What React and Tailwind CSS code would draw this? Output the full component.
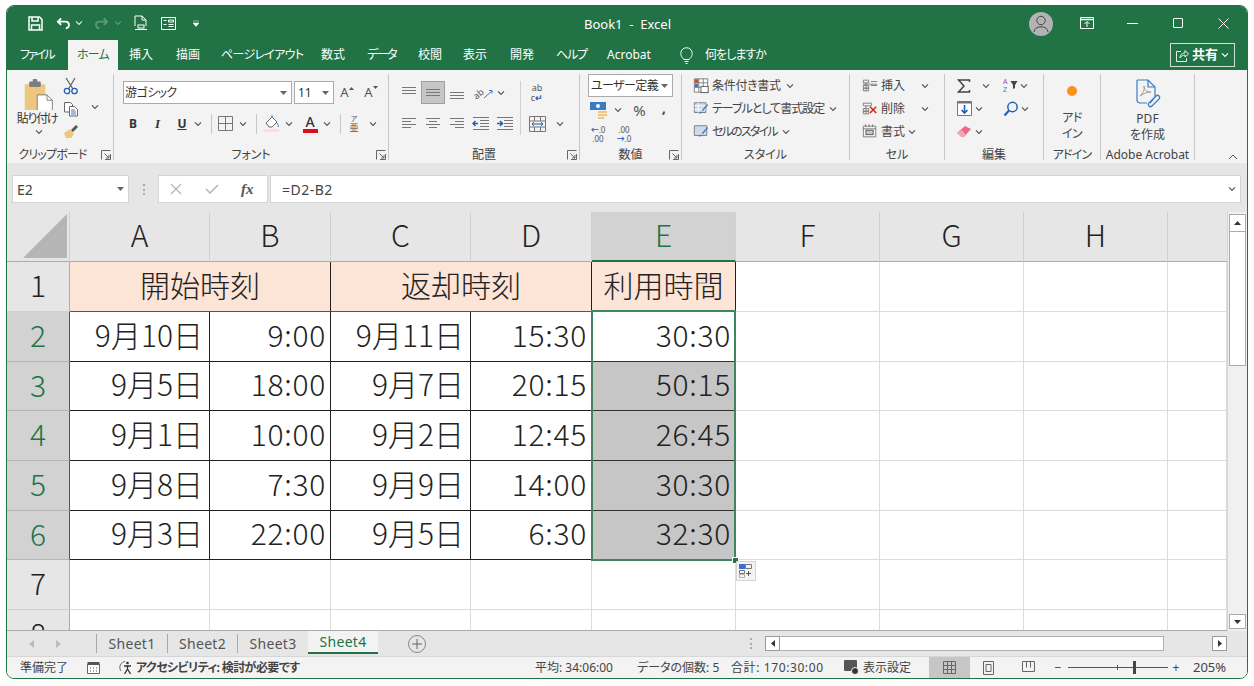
import React from 'react';

const Chev = ({ c = '#555' }) => (
  <svg width="8" height="6" viewBox="0 0 8 6" className="shrink-0"><path d="M1 1.3 L4 4.3 L7 1.3" stroke={c} fill="none" strokeWidth="1.2" /></svg>
);
const Launcher = () => (
  <svg width="10" height="10" viewBox="0 0 10 10" className="shrink-0"><path d="M.5 9.500V.5h9M9.500 4v5.500H4M3.500 3.500 8 8M8 5v3H5" stroke="#666" fill="none" strokeWidth="1" /></svg>
);
const Lines = ({ v }) => {
  const sets = {
    top: [[1, 15, 2], [1, 15, 5], [1, 15, 8]],
    mid: [[1, 15, 4], [1, 15, 7], [1, 15, 10]],
    bot: [[1, 15, 7], [1, 15, 10], [1, 15, 13]],
    left: [[1, 15, 2], [1, 10, 5], [1, 15, 8], [1, 10, 11]],
    center: [[1, 15, 2], [4, 12, 5], [1, 15, 8], [4, 12, 11]],
    right: [[1, 15, 2], [6, 15, 5], [1, 15, 8], [6, 15, 11]],
  };
  return (
    <svg width="16" height="15" viewBox="0 0 16 15">
      {sets[v].map((l, i) => <path key={i} d={`M${l[0]} ${l[2] + .5}H${l[1]}`} stroke="#777" />)}
    </svg>
  );
};
const Indent = ({ flip }) => (
  <svg width="18" height="15" viewBox="0 0 18 15">
    <path d="M1 1.500H17M8 4.500H17M8 7.500H17M8 10.500H17M1 13.500H17" stroke="#777" />
    {flip
      ? <path d="M1 7.500H6M4 5 6.500 7.500 4 10" stroke="#1f5fb5" strokeWidth="1.500" fill="none" />
      : <path d="M6 7.500H1M3.500 5 1 7.500 3.500 10" stroke="#1f5fb5" strokeWidth="1.500" fill="none" />}
  </svg>
);
const Save = () => (
  <svg width="15" height="15" viewBox="0 0 15 15"><path d="M1 1h10.500L14 3.500V14H1zM4 1v4h6V1M3.500 14V9h8v5" fill="none" stroke="#fff" strokeWidth="1.500" /></svg>
);
const Undo = ({ c = '#fff' }) => (
  <svg width="15" height="13" viewBox="0 0 16 13"><path d="M5.500 1 2 4.500 5.500 8M2 4.500h8c5 0 5 7 .5 7" fill="none" stroke={c} strokeWidth="2" /></svg>
);
const Redo = ({ c }) => (
  <svg width="15" height="13" viewBox="0 0 16 13"><path d="M10.500 1 14 4.500 10.500 8M14 4.500H6c-5 0-5 7-.5 7" fill="none" stroke={c} strokeWidth="2" /></svg>
);
const TableIcon = ({ children }) => (
  <svg width="16" height="17" viewBox="0 0 18 18">{children}</svg>
);
const Drop = () => (
  <svg width="7" height="4" viewBox="0 0 7 4" className="shrink-0"><path d="M0 0h7L3.500 4z" fill="#666" /></svg>
);

function Group({ className, label, children, launcher }) {
  return (
    <div className={`h-[86px] flex flex-col border-r border-[#c6c6c6] shrink-0 relative ${className}`}>
      <div className="h-[75px]">{children}</div>
      <div className="h-[11px] flex items-center justify-center text-[12px] leading-[11px] text-[#444] relative">
        <span className="whitespace-nowrap">{label}</span>
        {launcher && <span className="absolute right-[2px] top-[1px]"><Launcher /></span>}
      </div>
    </div>
  );
}

const RowText = ({ icon, label, gap = '' }) => (
  <div className="h-[23px] flex items-center text-[12px] text-[#444] whitespace-nowrap">
    <span className="w-[19px] flex justify-center">{icon}</span>
    <span className={`ml-[2px] ${gap}`}>{label}</span>
    <Chev />
  </div>
);

function Ribbon() {
  return (
    <div className="h-[93px] bg-[#f3f3f3] flex items-start pt-[4px] relative shrink-0">
      <Group className="w-[107px]" label={<span className="pr-[15px] tracking-[-0.8px]">クリップボード</span>} launcher>
        <div className="flex">
          <div className="ml-[10px] w-[44px] flex flex-col items-center">
            <svg width="34" height="32" viewBox="0 0 36 36" className="mt-[4px]">
              <rect x="2" y="7" width="23" height="29" fill="#eec77f" />
              <rect x="7" y="4" width="13" height="6" rx="1" fill="#7d7d7d" />
              <rect x="11" y="1" width="5" height="5" rx="1" fill="#7d7d7d" />
              <path d="M16 19h11l6 6v12H16z" fill="#fff" stroke="#777" />
              <path d="M27 19v6h6" fill="none" stroke="#777" />
            </svg>
            <span className="text-[12px] leading-[14px] text-[#333] whitespace-nowrap tracking-[-1.3px] mr-[4px] mt-[2px]">貼り付け</span>
            <span className="mt-[3px]"><Chev /></span>
          </div>
          <div className="flex flex-col items-center w-[20px]">
            <div className="h-[23px] flex items-center">
              <svg width="16" height="18" viewBox="0 0 16 18"><path d="M3 1 10 12M12 1 5.500 12" stroke="#666" strokeWidth="1.300" fill="none" /><circle cx="4" cy="14" r="2.700" fill="none" stroke="#1f5fb5" strokeWidth="1.300" /><circle cx="11.500" cy="14" r="2.700" fill="none" stroke="#1f5fb5" strokeWidth="1.300" /></svg>
            </div>
            <div className="h-[23px] flex items-center">
              <svg width="16" height="16" viewBox="0 0 16 16"><path d="M1.500 1.500h6l2 2V11h-8z" fill="#fff" stroke="#666" /><path d="M6.500 5.500h5l3 3v6.500h-8z" fill="#fff" stroke="#666" /><path d="M8 9h4M8 11h5M8 13h5" stroke="#3b7bc4" /></svg>
            </div>
            <div className="h-[23px] flex items-center">
              <svg width="16" height="15" viewBox="0 0 16 15"><path d="M1 9 7 5l4 5-3 4H3z" fill="#eec77f" /><path d="M8 6l5-5 2 2-5 5z" fill="#555" /></svg>
            </div>
          </div>
          <div className="ml-[10px] h-[65px] flex items-center"><Chev /></div>
        </div>
      </Group>

      <Group className="w-[275px]" label="フォント" launcher>
        <div className="pl-[9px] pt-[7px]">
          <div className="flex items-center h-[23px]">
            <div className="w-[169px] h-[23px] bg-white border border-[#ababab] flex items-center justify-between pl-[1px] pr-[4px] text-[12px] text-[#333]">
              <span className="tracking-[-0.6px]">游ゴシック</span>
              <Drop />
            </div>
            <div className="ml-[2px] w-[40px] h-[23px] bg-white border border-[#ababab] flex items-center justify-between pl-[3px] pr-[4px] text-[12px] text-[#333]">
              <span>11</span>
              <Drop />
            </div>
            <div className="w-[24px] ml-[1px] flex justify-center items-start text-[13px] text-[#555]">
              A<svg width="5" height="4" viewBox="0 0 5 4" className="mt-[3px]"><path d="M0 4l2.500-3L5 4" fill="#555" /></svg>
            </div>
            <div className="w-[24px] flex justify-center items-start text-[13px] text-[#555]">
              A<svg width="5" height="4" viewBox="0 0 5 4" className="mt-[3px]"><path d="M0 0l2.500 3L5 0" fill="#555" /></svg>
            </div>
          </div>
          <div className="flex items-center h-[23px] mt-[8px] text-[#333]">
            <span className="w-[24px] ml-[-2px] text-center font-bold text-[12px]">B</span>
            <span className="w-[25px] text-center italic font-bold text-[13px] font-['Liberation_Serif',serif]">I</span>
            <span className="w-[24px] text-center underline font-bold text-[12px]">U</span>
            <span className="w-[10px]"><Chev /></span>
            <span className="w-[7px]" />
            <span className="h-[20px] border-r border-[#c6c6c6]" />
            <span className="w-[27px] flex justify-center">
              <svg width="15" height="15" viewBox="0 0 15 15"><path d="M.5.500h14v14H.5zM7.500.500v14M.5 7.500h14" stroke="#777" fill="none" /></svg>
            </span>
            <span className="w-[10px]"><Chev /></span>
            <span className="w-[7px]" />
            <span className="h-[20px] border-r border-[#c6c6c6]" />
            <span className="ml-[3px] w-[24px] flex justify-center">
              <svg width="16" height="17" viewBox="0 0 16 17"><path d="M2 8 8 2l5 5-5 5H5z" fill="#fff" stroke="#666" /><path d="M8 2V0M13 8c1 2 2 3 1 4" stroke="#3b7bc4" fill="none" /><rect y="14.500" width="15" height="2" fill="#f9d9cd" /></svg>
            </span>
            <span className="ml-[1px] w-[10px]"><Chev /></span>
            <span className="w-[5px]" />
            <span className="w-[20px] flex flex-col items-center">
              <span className="text-[14px] leading-[14px] font-medium text-[#333]">A</span>
              <span className="w-[15px] h-[4px] bg-[#e00b1c]" />
            </span>
            <span className="w-[3px]" />
            <span className="w-[10px]"><Chev /></span>
            <span className="w-[7px]" />
            <span className="h-[20px] border-r border-[#c6c6c6]" />
            <span className="w-[26px] flex justify-center flex-col items-center text-[7px] leading-[8px] text-[#555]"><span>ア</span><span className="text-[9px] leading-[10px]">亜</span></span>
            <span className="w-[10px] ml-[2px]"><Chev /></span>
          </div>
        </div>
      </Group>

      <Group className="w-[191px]" label="配置" launcher>
        <div className="flex pl-[8px] pt-[7px]">
          <div>
            <div className="flex items-center h-[23px]">
              <span className="w-[24px] flex justify-center"><Lines v="top" /></span>
              <span className="w-[24px] h-[23px] flex items-center justify-center bg-[#c6c6c6] border border-[#a0a0a0]"><Lines v="mid" /></span>
              <span className="w-[24px] flex justify-center"><Lines v="bot" /></span>
              <span className="w-[28px] flex justify-center">
                <svg width="20" height="16" viewBox="0 0 20 16"><text x="1" y="12" fontSize="9" fill="#555" transform="rotate(-38 6 10)">ab</text><path d="M11 13 19 6M16 5.500h3v3" stroke="#3b7bc4" fill="none" /></svg>
              </span>
              <Chev />
            </div>
            <div className="flex items-center h-[23px] mt-[8px]">
              <span className="w-[24px] flex justify-center"><Lines v="left" /></span>
              <span className="w-[24px] flex justify-center"><Lines v="center" /></span>
              <span className="w-[24px] flex justify-center"><Lines v="right" /></span>
              <span className="w-[24px] flex justify-center"><Indent /></span>
              <span className="w-[24px] flex justify-center"><Indent flip /></span>
            </div>
          </div>
          <div className="ml-[3px] h-[54px] border-r border-[#d0d0d0]" />
          <div className="ml-[4px]">
            <div className="h-[23px] w-[24px] flex flex-col items-center justify-center text-[9px] leading-[10px] text-[#555]">
              <span>ab</span>
              <span>c<b className="text-[#1f5fb5]">↵</b></span>
            </div>
            <div className="h-[23px] mt-[8px] flex items-center">
              <span className="w-[24px] flex justify-center">
                <svg width="17" height="16" viewBox="0 0 17 16"><path d="M.5.500h16v15H.5zM.5 5h16M.5 11h16M5.500.500V5M11.500.500V5M5.500 11v4.500M11.500 11v4.500" stroke="#777" fill="none" /><path d="M3 8h11M5 6.300 3 8l2 1.700M12 6.300 14 8l-2 1.700" stroke="#1f5fb5" fill="none" /></svg>
              </span>
              <span className="ml-[7px]"><Chev /></span>
            </div>
          </div>
        </div>
      </Group>

      <Group className="w-[102px]" label="数値" launcher>
        <div className="pl-[8px]">
          <div className="w-[85px] h-[23px] bg-white border border-[#ababab] flex items-center justify-between pl-[2px] pr-[4px] text-[12px] text-[#333]">
            <span className="whitespace-nowrap tracking-[-0.6px]">ユーザー定義</span>
            <Drop />
          </div>
          <div className="flex items-center h-[24px] mt-[1px] pl-[2px]">
            <span className="w-[18px] flex justify-center">
              <svg width="18" height="17" viewBox="0 0 18 17"><rect width="16" height="8" fill="#3b7bc4" /><circle cx="8" cy="4" r="2" fill="#fff" /><rect x="8" y="9" width="9" height="2" fill="#eec77f" /><rect x="8" y="12" width="9" height="2" fill="#eec77f" /><rect x="8" y="15" width="6" height="2" fill="#eec77f" /></svg>
            </span>
            <span className="ml-[6px]"><Chev /></span>
            <span className="w-[29px] ml-[3px] text-center text-[15px] text-[#555]">%</span>
            <span className="w-[20px] text-center text-[15px] font-bold text-[#555] leading-[15px] pb-[5px]">,</span>
          </div>
          <div className="flex items-center h-[24px] gap-[6px]">
            <div className="w-[20px] flex flex-col items-center text-[8px] leading-[9px] text-[#555]"><span><b className="text-[#1f5fb5]">←</b>.0</span><span>.00</span></div>
            <div className="w-[20px] flex flex-col items-center text-[8px] leading-[9px] text-[#555]"><span>.00</span><span><b className="text-[#1f5fb5]">→</b>.0</span></div>
          </div>
        </div>
      </Group>

      <Group className="w-[168px]" label="スタイル">
        <div className="pl-[9px]">
          <RowText gap="mr-[5px] tracking-[-0.3px]" label="条件付き書式" icon={
            <TableIcon><path d="M1.500 1.500h15v15h-15zM1.500 6h15M1.500 11h15M6.500 1.500v15M11.500 1.500v15" stroke="#777" fill="#fff" /><rect x="2" y="2" width="4" height="4" fill="#d24726" /><rect x="2" y="7" width="4" height="4" fill="#3b7bc4" /><rect x="9" y="10" width="8" height="7" fill="#fff" stroke="#555" /></TableIcon>
          } />
          <RowText gap="mr-[5px] tracking-[-1px]" label="テーブルとして書式設定" icon={
            <TableIcon><path d="M1.500 2.500h13v11h-13z" fill="#cfd9ea" stroke="#777" /><path d="M1.500 6h13M1.500 10h13M6 2.500v11" stroke="#fff" /><path d="M10 11 16 4l1 1-6 7zM6 15c2-3 4-3 4-1" fill="#3b7bc4" /></TableIcon>
          } />
          <RowText gap="mr-[5px] tracking-[-1.8px]" label="セルのスタイル" icon={
            <TableIcon><path d="M1.500 2.500h14v11h-14z" fill="#cfd9ea" stroke="#777" /><path d="M10 11 16 4l1 1-6 7zM6 15c2-3 4-3 4-1" fill="#3b7bc4" /></TableIcon>
          } />
        </div>
      </Group>

      <Group className="w-[95px]" label="セル">
        <div className="pl-[10px]">
          <div className="h-[23px] flex items-center text-[12px] text-[#444]">
            <span className="w-[19px] flex justify-center"><TableIcon><path d="M1.500 3h6v3h-6zM1.500 9h6v3h-6zM1.500 12h6v3h-6zM4.500 6v9M1 7.500h16M10 4.500h7" stroke="#777" fill="none" /><path d="M10 9h7" stroke="#3b7bc4" /></TableIcon></span>
            <span className="ml-[2px] w-[24px] whitespace-nowrap">挿入</span>
            <span className="ml-[16px]"><Chev /></span>
          </div>
          <div className="h-[23px] flex items-center text-[12px] text-[#444]">
            <span className="w-[19px] flex justify-center"><TableIcon><path d="M1.500 3h9v3h-9zM1.500 9h6v3h-6zM1.500 12h6v3h-6zM4.500 6v9" stroke="#777" fill="none" /><path d="M9 7l7 7M16 7l-7 7" stroke="#d02a1c" strokeWidth="1.800" /></TableIcon></span>
            <span className="ml-[2px] w-[24px] whitespace-nowrap">削除</span>
            <span className="ml-[16px]"><Chev /></span>
          </div>
          <div className="h-[23px] flex items-center text-[12px] text-[#444]">
            <span className="w-[19px] flex justify-center"><TableIcon><path d="M1.500 3h14v12h-14zM4 1v3M8 1v3M12 1v3M1 6h15" stroke="#777" fill="none" /><rect x="4.500" y="7.500" width="8" height="5" fill="#c8c8c8" stroke="#555" /></TableIcon></span>
            <span className="ml-[2px] w-[24px] whitespace-nowrap">書式</span>
            <span className="ml-[3px]"><Chev /></span>
          </div>
        </div>
      </Group>

      <Group className="w-[99px]" label="編集">
        <div className="pl-[10px]">
          <div className="h-[23px] flex items-center">
            <span className="w-[18px] flex justify-center">
              <svg width="14" height="14" viewBox="0 0 14 14"><path d="M12.500 3V1H1.500l5.500 6-5.500 6h11v-2" fill="none" stroke="#444" strokeWidth="1.500" /></svg>
            </span>
            <span className="ml-[9px]"><Chev /></span>
            <span className="ml-[12px] w-[18px] flex justify-center">
              <svg width="16" height="15" viewBox="0 0 16 15"><text x="0" y="6" fontSize="7" fill="#8a4db0">A</text><text x="0" y="14" fontSize="7" fill="#3b7bc4">Z</text><path d="M7.500 3h7L12 7v3l-2 1V7z" fill="#444" /></svg>
            </span>
            <Chev />
          </div>
          <div className="h-[23px] flex items-center">
            <span className="w-[18px] flex justify-center">
              <svg width="15" height="15" viewBox="0 0 15 15"><path d="M.5.500h14v14H.5z" fill="#fff" stroke="#777" /><rect x=".5" y=".5" width="14" height="2" fill="#777" /><path d="M7.500 4v8M4.500 9l3 3 3-3" fill="none" stroke="#1f5fb5" strokeWidth="1.600" /></svg>
            </span>
            <span className="ml-[2px]"><Chev /></span>
            <span className="ml-[19px] w-[18px] flex justify-center">
              <svg width="16" height="16" viewBox="0 0 16 16"><circle cx="9.500" cy="6" r="4.700" fill="none" stroke="#1f5fb5" strokeWidth="1.500" /><path d="M6 9.500 1.500 14.500" stroke="#1f5fb5" strokeWidth="2" /></svg>
            </span>
            <span className="ml-[1px]"><Chev /></span>
          </div>
          <div className="h-[23px] flex items-center">
            <span className="w-[18px] flex justify-center">
              <svg width="15" height="13" viewBox="0 0 15 13"><path d="M0 8 8 1l6 3-7 8z" fill="#ea6a86" /><path d="M0 8l4 4h3l2-2-4-5z" fill="#f3a4b5" /></svg>
            </span>
            <span className="ml-[2px]"><Chev /></span>
          </div>
        </div>
      </Group>

      <Group className="w-[57px]" label={<span className="tracking-[-0.8px]">アドイン</span>}>
        <div className="flex flex-col items-center">
          <span className="w-[10px] h-[10px] rounded-full bg-[#f9921e] mt-[12px]" />
          <span className="text-[12px] leading-[16px] text-[#444] text-center mt-[14px] tracking-[-0.6px]">アド<br />イン</span>
        </div>
      </Group>

      <Group className="w-[94px]" label="Adobe Acrobat">
        <div className="flex flex-col items-center">
          <svg width="26" height="30" viewBox="0 0 26 30" className="mt-[5px]">
            <path d="M2 1h11l7 7v10M13 1v7h7M12 24H5a3 3 0 0 1-3-3V1" fill="none" stroke="#3b7bc4" strokeWidth="1.200" />
            <path d="M5 17c3-2 5-7 4-10 0 4 3 6 7 6-3 0-7 1-11 4z" fill="none" stroke="#8a8a8a" strokeWidth=".8" />
            <path d="M15 24l6-7a2 2 0 0 1 3 3l-7 7a2 2 0 0 1-3-3l5-5" fill="none" stroke="#3b7bc4" strokeWidth="1.200" />
          </svg>
          <span className="text-[12px] leading-[16px] text-[#444] text-center mt-[2px]">PDF<br />を作成</span>
        </div>
      </Group>

      <span className="absolute right-[9px] bottom-[3px]">
        <svg width="10" height="6" viewBox="0 0 10 6"><path d="M1 5l4-4 4 4" stroke="#555" fill="none" /></svg>
      </span>
    </div>
  );
}

const hdrCell = 'flex items-center justify-center pb-[4px] bg-[#e6e6e6] border-r border-b border-r-[#d0d0d0] border-b-[#ababab] text-[30px] text-[#222]';
const rowSel = 'flex items-center justify-center pb-[4px] bg-[#d2d2d2] border-r border-b border-r-[#217346] border-b-[#b5b5b5] text-[30px] text-[#217346]';
const rowNorm = 'flex items-center justify-center pb-[4px] bg-[#e6e6e6] border-r border-b border-r-[#ababab] border-b-[#d0d0d0] text-[30px] text-[#222]';
const blank = 'bg-white border-r border-b border-[#dcdcdc]';
const head = 'bg-[#fce4d6] border-r border-b border-r-[#222] border-b-[#555] flex items-center justify-center pb-[5px] text-[30px] text-[#222]';
const dateCell = 'bg-white border-r border-b border-[#222] flex items-center justify-end pr-[6px] pb-[5px] text-[30px] text-[#222]';
const timeCell = 'bg-white border-r border-b border-[#222] flex items-center justify-end pr-[4px] pb-[5px] text-[30px] tracking-[0.7px] text-[#222]';
const dataSel = 'bg-[#c6c6c6] border-b border-[#333] flex items-center justify-end pr-[5px] pb-[5px] text-[30px] tracking-[0.7px] text-[#222]';
const dataFirst = 'bg-white border-b border-[#333] flex items-center justify-end pr-[5px] pb-[5px] text-[30px] tracking-[0.7px] text-[#222]';

const table = [
  ['9月10日', '9:00', '9月11日', '15:30', '30:30'],
  ['9月5日', '18:00', '9月7日', '20:15', '50:15'],
  ['9月1日', '10:00', '9月2日', '12:45', '26:45'],
  ['9月8日', '7:30', '9月9日', '14:00', '30:30'],
  ['9月3日', '22:00', '9月5日', '6:30', '32:30'],
];

function Sheet() {
  return (
    <div className="h-[419px] flex shrink-0">
      <div className="relative w-[1220px] overflow-hidden border-b border-[#ababab] font-['Noto_Sans_CJK_JP',sans-serif] font-light [font-feature-settings:normal]">
        <div className="grid grid-cols-[63px_140px_121px_140px_121px_144px_144px_144px_144px_59px] grid-rows-[50px_50px_50px_49px_50px_50px_49px_50px_50px]">
          <div className="bg-[#e6e6e6] border-r border-b border-r-[#d0d0d0] border-b-[#ababab] flex items-end justify-end pb-[3px] pr-[2px]">
            <svg width="44" height="44" viewBox="0 0 44 44"><path d="M44 0V44H0z" fill="#b5b5b5" /></svg>
          </div>
          {['A', 'B', 'C', 'D'].map((c) => <div key={c} className={hdrCell}>{c}</div>)}
          <div className="flex items-center justify-center pb-[4px] bg-[#d2d2d2] border-r border-r-[#d0d0d0] border-b-2 border-b-[#217346] text-[30px] text-[#217346]">E</div>
          {['F', 'G', 'H'].map((c) => <div key={c} className={hdrCell}>{c}</div>)}
          <div className="bg-[#e6e6e6] border-b border-b-[#ababab]" />

          <div className={rowNorm}>1</div>
          <div className={`${head} col-span-2`}>開始時刻</div>
          <div className={`${head} col-span-2`}>返却時刻</div>
          <div className={head}>利用時間</div>
          <div className={blank} /><div className={blank} /><div className={blank} /><div className={blank} />

          {table.map((r, i) => (
            <React.Fragment key={i}>
              <div className={rowSel}>{i + 2}</div>
              <div className={dateCell}>{r[0]}</div>
              <div className={timeCell}>{r[1]}</div>
              <div className={dateCell}>{r[2]}</div>
              <div className={timeCell}>{r[3]}</div>
              <div className={i === 0 ? dataFirst : dataSel}>{r[4]}</div>
              <div className={blank} /><div className={blank} /><div className={blank} /><div className={blank} />
            </React.Fragment>
          ))}

          {[7, 8].map((n) => (
            <React.Fragment key={n}>
              <div className={rowNorm}>{n}</div>
              {Array.from({ length: 9 }).map((_, j) => <div key={j} className={blank} />)}
            </React.Fragment>
          ))}
        </div>
        <div className="absolute left-[584px] top-[98px] w-[145px] h-[251px] border-2 border-[#3f8560] pointer-events-none" />
        <div className="absolute left-[725px] top-[345px] w-[7px] h-[7px] bg-[#217346] border border-white" />
        <div className="absolute left-[729px] top-[349px] w-[20px] h-[20px] bg-[#f3f3f3] border border-[#d4d4d4] flex items-center justify-center">
          <svg width="14" height="14" viewBox="0 0 14 14"><rect x="0" y="0" width="6" height="5" fill="#3b6fd4" /><path d="M6.500.500h6v4h-6zM.5 6.500h5v3h-5z" fill="none" stroke="#777" /><path d="M.5 10.500h5v3h-5z" fill="none" stroke="#777" strokeDasharray="1 1" /><path d="M9.500 7v5M7 9.500h5" stroke="#555" /></svg>
        </div>
      </div>
      <div className="w-[20px] bg-[#f0f0f0] border-l border-[#d4d4d4] flex flex-col items-center py-[2px]">
        <div className="w-[17px] h-[18px] bg-white border border-[#ababab] flex items-center justify-center">
          <svg width="7" height="4" viewBox="0 0 7 4"><path d="M0 4h7L3.500 0z" fill="#333" /></svg>
        </div>
        <div className="w-[17px] h-[134px] bg-white border-x border-b border-[#ababab]" />
        <div className="flex-1" />
        <div className="w-[17px] h-[15px] bg-white border border-[#ababab] flex items-center justify-center">
          <svg width="7" height="4" viewBox="0 0 7 4"><path d="M0 0h7L3.500 4z" fill="#333" /></svg>
        </div>
      </div>
    </div>
  );
}

function SheetTabs() {
  return (
    <div className="h-[25px] bg-[#e6e6e6] flex items-center text-[14px] tracking-[0.3px] text-[#555] relative shrink-0">
      <div className="w-[89px] flex items-center pl-[22px] gap-[20px] shrink-0">
        <svg width="6" height="8" viewBox="0 0 6 8"><path d="M5 0v8L0 4z" fill="#bbb" /></svg>
        <svg width="6" height="8" viewBox="0 0 6 8"><path d="M1 0v8l5-4z" fill="#bbb" /></svg>
      </div>
      <div className="flex items-center h-[25px] shrink-0">
        <span className="h-[19px] border-r border-[#a8a8a8]" />
        <span className="w-[70px] text-center whitespace-nowrap">Sheet1</span>
        <span className="h-[19px] border-r border-[#a8a8a8]" />
        <span className="w-[69px] text-center whitespace-nowrap">Sheet2</span>
        <span className="h-[19px] border-r border-[#a8a8a8]" />
        <span className="w-[70px] text-center whitespace-nowrap">Sheet3</span>
        <span className="w-[70px] h-[23px] self-start bg-[#f3f3f3] border-b-2 border-[#217346] text-[#217346] flex items-center justify-center">Sheet4</span>
      </div>
      <span className="ml-[30px] w-[18px] h-[18px] rounded-full border border-[#888] flex items-center justify-center shrink-0">
        <svg width="10" height="10" viewBox="0 0 10 10"><path d="M5 0v10M0 5h10" stroke="#666" /></svg>
      </span>
      <div className="ml-[324px] w-[2px] h-[11px] border-l-2 border-dotted border-[#aaa] shrink-0" />
      <div className="ml-[13px] w-[15px] h-[15px] bg-white border border-[#9a9a9a] flex items-center justify-center shrink-0">
        <svg width="4" height="7" viewBox="0 0 4 7"><path d="M4 0v7L0 3.500z" fill="#333" /></svg>
      </div>
      <div className="w-[384px] h-[15px] bg-white border-y border-r border-[#b0b0b0] shrink-0" />
      <div className="ml-[48px] w-[15px] h-[15px] bg-white border border-[#9a9a9a] flex items-center justify-center shrink-0">
        <svg width="4" height="7" viewBox="0 0 4 7"><path d="M0 0v7l4-3.500z" fill="#333" /></svg>
      </div>
    </div>
  );
}

function StatusBar() {
  return (
    <div className="h-[22px] bg-[#f3f3f3] border-t border-[#d6d6d6] flex items-center text-[12px] text-[#444] whitespace-nowrap shrink-0">
      <span className="ml-[13px] w-[46px]">準備完了</span>
      <span className="ml-[21px]">
        <svg width="13" height="13" viewBox="0 0 13 13"><path d="M.5 3.500h12v9H.5z" fill="#fff" stroke="#666" /><rect x=".5" y="1" width="12" height="3" fill="#555" /><path d="M3 7h1M6 7h1M9 7h1M3 10h1M6 10h1M9 10h1" stroke="#555" /></svg>
      </span>
      <span className="ml-[18px]">
        <svg width="16" height="15" viewBox="0 0 16 15"><path d="M3 11A6 6 0 0 1 7 1.500" fill="none" stroke="#666" /><circle cx="9.500" cy="3" r="1.300" fill="#333" /><path d="M6 6h7M9.500 6v3M6.500 14l3-5 3 5" fill="none" stroke="#333" strokeWidth="1.300" /></svg>
      </span>
      <span className="ml-[2px] font-bold w-[165px] tracking-[-0.6px]">アクセシビリティ: 検討が必要です</span>
      <span className="ml-[234px] w-[86px]">平均: 34:06:00</span>
      <span className="ml-[16px] w-[79px]">データの個数: 5</span>
      <span className="ml-[15px] w-[93px] tracking-[0.6px]">合計: 170:30:00</span>
      <span className="ml-[20px]">
        <svg width="17" height="15" viewBox="0 0 17 15"><rect x="0" y="0" width="13" height="11" rx="1" fill="#555" /><circle cx="11" cy="11" r="3.500" fill="#333" stroke="#f3f3f3" /></svg>
      </span>
      <span className="w-[48px] ml-[2px]">表示設定</span>
      <span className="ml-[18px] w-[41px] h-[21px] bg-[#c6c6c6] flex items-center justify-center">
        <svg width="13" height="13" viewBox="0 0 13 13"><path d="M.5.500h12v12H.5zM4.500.500v12M8.500.500v12M.5 4.500h12M.5 8.500h12" stroke="#666" fill="none" /></svg>
      </span>
      <span className="w-[37px] flex justify-center">
        <svg width="11" height="14" viewBox="0 0 11 14"><path d="M.5.500h10v13H.5zM3 3.500h5v7H3z" stroke="#666" fill="none" /></svg>
      </span>
      <span className="w-[43px] flex justify-center">
        <svg width="13" height="13" viewBox="0 0 13 13"><path d="M.5 10.500V.5h12v10M.5 10.500h12M4.500.5v6M8.500.5v6" stroke="#666" fill="none" /></svg>
      </span>
      <span className="ml-[3px] w-[10px] text-center">−</span>
      <span className="ml-[5px] w-[100px] h-[13px] relative flex items-center">
        <span className="w-full h-[1px] bg-[#555]" />
        <span className="absolute left-[49px] top-[4px] w-[1px] h-[5px] bg-[#555]" />
        <span className="absolute left-[65px] top-0 w-[3px] h-[13px] bg-[#444]" />
      </span>
      <span className="ml-[3px] w-[10px] text-center">+</span>
      <span className="ml-[12px] text-[13px]">205%</span>
    </div>
  );
}

export default function App() {
  return (
    <div className="w-[1254px] h-[686px] bg-white pt-[5px] pl-[6px] font-['Noto_Sans','Noto_Sans_CJK_JP',sans-serif] [font-feature-settings:'palt'] overflow-hidden">
      <div className="w-[1242px] h-[674px] border border-[#217346] rounded-[8px] overflow-hidden flex flex-col">
        <div className="h-[34px] bg-[#217346] flex items-center relative text-white shrink-0">
          <span className="ml-[21px]"><Save /></span>
          <span className="ml-[13px]"><Undo /></span>
          <span className="ml-[4px]"><Chev c="#e5efe9" /></span>
          <span className="ml-[11px]"><Redo c="#5f9a7c" /></span>
          <span className="ml-[5px]"><Chev c="#5f9a7c" /></span>
          <span className="ml-[12px]">
            <svg width="14" height="16" viewBox="0 0 14 16"><path d="M1 11V1h7l4 4v6M8 1v4h4M1 14.500h12" fill="none" stroke="#fff" /><rect x="4" y="10" width="6" height="3" fill="none" stroke="#fff" /></svg>
          </span>
          <span className="ml-[13px]">
            <svg width="15" height="13" viewBox="0 0 15 13"><path d="M.5.500h14v12H.5zM2.500 3.500h3M7.500 3h5v2h-5zM7.500 7.500h5M2.500 7.500h3M7.500 9.500h5" fill="none" stroke="#fff" /></svg>
          </span>
          <span className="ml-[17px]">
            <svg width="6" height="7" viewBox="0 0 6 7"><path d="M0 1h6M0 3h6L3 6.500z" fill="#fff" stroke="#fff" strokeWidth=".5" /></svg>
          </span>
          <span className="absolute left-[577px] top-[10px] text-[13px] leading-[16px] whitespace-pre">Book1  -  Excel</span>
          <span className="absolute left-[1022px] top-[6px] w-[24px] h-[24px] rounded-full bg-[#b3b3b3] flex items-center justify-center">
            <svg width="16" height="18" viewBox="0 0 16 18"><circle cx="8" cy="5.500" r="4.200" fill="none" stroke="#444" /><path d="M1 17c0-7 14-7 14 0" fill="none" stroke="#444" /></svg>
          </span>
          <span className="absolute left-[1073px] top-[11px]">
            <svg width="14" height="12" viewBox="0 0 14 12"><path d="M.5.500h13v11H.5z" fill="none" stroke="#fff" /><path d="M.5 2.500h13" stroke="#fff" strokeWidth="1.500" /><path d="M7 10V5M4.500 7 7 4.500 9.500 7" fill="none" stroke="#fff" /></svg>
          </span>
          <span className="absolute left-[1120px] top-[17px] w-[11px] h-[1px] bg-white" />
          <span className="absolute left-[1166px] top-[12px] w-[10px] h-[10px] border border-white rounded-[1px]" />
          <span className="absolute left-[1211px] top-[12px]">
            <svg width="11" height="11" viewBox="0 0 11 11"><path d="M.5.500l10 10M10.500.500l-10 10" stroke="#fff" /></svg>
          </span>
        </div>

        <div className="h-[30px] bg-[#217346] flex items-center text-[12px] text-white relative shrink-0 whitespace-nowrap">
          <span className="ml-[13px] w-[33px] tracking-[-2px]">ファイル</span>
          <span className="ml-[15px] w-[50px] h-[30px] bg-[#f3f3f3] text-[#217346] flex items-center justify-center tracking-[-0.8px]">ホーム</span>
          <span className="ml-[11px] w-[24px]">挿入</span>
          <span className="ml-[23px] w-[24px]">描画</span>
          <span className="ml-[21px] w-[79px] tracking-[-0.7px]">ページレイアウト</span>
          <span className="ml-[21px] w-[24px]">数式</span>
          <span className="ml-[22px] w-[29px] tracking-[-1.5px]">データ</span>
          <span className="ml-[22px] w-[24px]">校閲</span>
          <span className="ml-[21px] w-[25px]">表示</span>
          <span className="ml-[22px] w-[24px]">開発</span>
          <span className="ml-[22px] w-[30px] tracking-[-1.2px]">ヘルプ</span>
          <span className="ml-[21px] w-[45px]">Acrobat</span>
          <span className="ml-[28px]">
            <svg width="13" height="19" viewBox="0 0 13 19"><path d="M4 13.500C1 11 .5 8 1 6a5.700 5.700 0 0 1 11 0c.5 2 0 5-3 7.500zM4.500 15.500h4M5.500 17.500h2" fill="none" stroke="#fff" /></svg>
          </span>
          <span className="ml-[12px] tracking-[-1px]">何をしますか</span>
          <span className="absolute left-[1163px] top-[3px] w-[65px] h-[24px] border border-[#cfe2d8] flex items-center justify-center gap-[3px]">
            <svg width="13" height="13" viewBox="0 0 13 13"><path d="M5 2.500H.5v10h10V9M4 9c0-4 3-5 5-5V1.500L12.500 5 9 8V6C7 6 5 7 4 9z" fill="none" stroke="#fff" strokeWidth=".9" /></svg>
            <b className="text-[13px]">共有</b>
            <Chev c="#fff" />
          </span>
        </div>

        <Ribbon />

        <div className="h-[49px] bg-[#e6e6e6] flex items-start pt-[12px] pl-[5px] shrink-0 text-[#444]">
          <div className="w-[117px] h-[28px] bg-white border border-[#d4d4d4] flex items-center justify-between pl-[4px] pr-[4px] text-[14px]">
            <span>E2</span>
            <Drop />
          </div>
          <div className="w-[29px] h-[28px] flex items-center justify-center">
            <span className="w-[2px] h-[11px] border-l-2 border-dotted border-[#aaa]" />
          </div>
          <div className="w-[110px] h-[28px] bg-white border border-[#d4d4d4] flex items-center pl-[11px]">
            <svg width="12" height="12" viewBox="0 0 12 12"><path d="M1 1l10 10M11 1 1 11" stroke="#b5b5b5" strokeWidth="1.300" /></svg>
            <svg width="14" height="12" viewBox="0 0 14 12" className="ml-[23px]"><path d="M1 6l4 4 8-8" stroke="#b5b5b5" strokeWidth="1.500" fill="none" /></svg>
            <span className="ml-[22px] italic font-['Liberation_Serif',serif] text-[15px] font-bold text-[#555]">fx</span>
          </div>
          <div className="ml-[2px] w-[971px] h-[28px] bg-white border border-[#d4d4d4] flex items-center justify-between pl-[11px] pr-[4px] text-[14px] tracking-[0.5px]">
            <span>=D2-B2</span>
            <Chev />
          </div>
        </div>

        <Sheet />
        <SheetTabs />
        <StatusBar />
      </div>
    </div>
  );
}
